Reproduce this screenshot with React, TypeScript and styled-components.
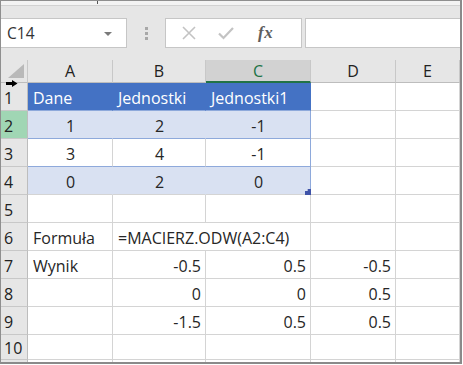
import React from "react";
import styled, { createGlobalStyle, css } from "styled-components";

const Global = createGlobalStyle`
  html, body { margin: 0; padding: 0; background: #ffffff; }
  *, *::before, *::after { box-sizing: border-box; }
  #root { width: 463px; height: 365px; }
`;

const FONT = `"Open Sans", "Liberation Sans", sans-serif`;

const Frame = styled.div`
  width: 462px;
  height: 364px;
  border-left: 1px solid #8f8f8f;
  border-top: 1px solid #8f8f8f;
  border-right: 2px solid #8a8a8a;
  border-bottom: 2px solid #8a8a8a;
  display: flex;
  flex-direction: column;
  overflow: hidden;
  background: #ffffff;
  font-family: ${FONT};
`;

const RibbonTail = styled.div`
  position: relative;
  height: 5px;
  flex: none;
  background: #f3f3f3;
  border-bottom: 1px solid #d2d2d2;
`;

const Tick = styled.span`
  position: absolute;
  left: 96px;
  top: 0;
  width: 1px;
  height: 3px;
  background: #555;
`;

const FormulaBar = styled.div`
  height: 54px;
  flex: none;
  background: #e6e6e6;
  display: flex;
  align-items: center;
`;

const NameBox = styled.div`
  width: 126px;
  height: 30px;
  background: #ffffff;
  border: 1px solid #c6c6c6;
  border-left: none;
  display: flex;
  align-items: center;
  justify-content: space-between;
  padding: 0 14px 0 6px;
  font-size: 15.5px;
  color: #333;
`;

const Caret = styled.span`
  width: 0;
  height: 0;
  border-left: 4px solid transparent;
  border-right: 4px solid transparent;
  border-top: 4px solid #7a7a7a;
  margin-top: 2px;
`;

const Grip = styled.div`
  width: 38px;
  display: flex;
  flex-direction: column;
  align-items: center;
  gap: 2px;
  & > span {
    width: 3px;
    height: 3px;
    background: #a8a8a8;
  }
`;

const FxButtons = styled.div`
  width: 137px;
  height: 30px;
  background: #ffffff;
  border: 1px solid #c6c6c6;
  display: flex;
  align-items: center;
  padding-left: 16px;
  gap: 22px;
`;

const FxIcon = styled.svg`
  display: block;
  flex: none;
`;

const FxText = styled.span`
  font-family: "Liberation Serif", serif;
  font-style: italic;
  font-weight: bold;
  font-size: 17px;
  color: #5e5e5e;
  margin-left: 2px;
  letter-spacing: 0.5px;
`;

const FormulaInput = styled.div`
  flex: 1;
  height: 30px;
  margin-left: 3px;
  background: #ffffff;
  border: 1px solid #c6c6c6;
  border-right: none;
`;

const Sheet = styled.div`
  flex: 1;
  display: grid;
  grid-template-columns: 27px 85px 93px 105px 85px 1fr;
  grid-template-rows: 23px repeat(9, 28px) 25px 1fr;
  overflow: hidden;
`;

const Corner = styled.div`
  position: relative;
  background: #e6e6e6;
  border-right: 1px solid #c8c8c8;
  border-bottom: 1px solid #bdbdbd;
`;

const CornerTriangle = styled.svg`
  position: absolute;
  left: 0;
  top: 0;
`;

const ColHeader = styled.div<{ $selected?: boolean }>`
  background: ${(p) => (p.$selected ? "#d2d2d2" : "#e6e6e6")};
  border-right: 1px solid #c8c8c8;
  border-bottom: ${(p) => (p.$selected ? "2px solid #217346" : "1px solid #bdbdbd")};
  display: flex;
  align-items: center;
  justify-content: center;
  font-size: 16px;
  color: ${(p) => (p.$selected ? "#217346" : "#222")};
  padding-top: ${(p) => (p.$selected ? "1px" : "0")};
`;

const RowHeader = styled.div<{ $selected?: boolean }>`
  position: relative;
  background: ${(p) => (p.$selected ? "#a0d6b4" : "#e6e6e6")};
  border-right: 1px solid #bdbdbd;
  border-bottom: 1px solid #c8c8c8;
  display: flex;
  align-items: center;
  padding: 2px 0 0 3px;
  font-size: 16px;
  color: #222;
`;

const SelectArrow = styled.svg`
  position: absolute;
  left: 5px;
  top: -3px;
`;

type Fill = "head" | "band" | "plain";

const fills: Record<Fill, string> = {
  head: "#4472c4",
  band: "#d9e1f2",
  plain: "transparent",
};

const Cell = styled.div<{
  $align?: "left" | "center" | "right";
  $fill?: Fill;
  $tableEdge?: boolean;
  $tableRow?: boolean;
  $span?: number;
}>`
  position: relative;
  grid-column: ${(p) => (p.$span ? `span ${p.$span}` : "auto")};
  background: ${(p) => fills[p.$fill || "plain"]};
  border-right: 1px solid
    ${(p) =>
      p.$tableEdge
        ? "#8ea9db"
        : p.$fill && p.$fill !== "plain"
        ? fills[p.$fill]
        : "#d4d4d4"};
  border-bottom: 1px solid ${(p) => (p.$tableRow ? "#8ea9db" : "#d4d4d4")};
  display: flex;
  align-items: center;
  justify-content: ${(p) =>
    p.$align === "center" ? "center" : p.$align === "right" ? "flex-end" : "flex-start"};
  padding: 3px 4px 0 5px;
  font-size: 16px;
  white-space: nowrap;
  color: ${(p) => (p.$fill === "head" ? "#ffffff" : "#262626")};
  ${(p) =>
    p.$fill === "head" &&
    css`
      border-right-color: #4472c4;
    `}
`;

const ResizeHandle = styled.span`
  position: absolute;
  right: -1px;
  bottom: -1px;
  width: 6px;
  height: 6px;
  background: #3f53a8;
  clip-path: polygon(45% 0, 100% 0, 100% 100%, 0 100%, 0 35%, 45% 35%);
`;

const cols = ["A", "B", "C", "D", "E"];

type CellData = {
  text?: string;
  align?: "left" | "center" | "right";
  span?: number;
};

const rows: { label: string; fill: Fill; table: boolean; cells: CellData[] }[] = [
  {
    label: "1",
    fill: "head",
    table: true,
    cells: [{ text: "Dane" }, { text: "Jednostki" }, { text: "Jednostki1" }],
  },
  {
    label: "2",
    fill: "band",
    table: true,
    cells: [
      { text: "1", align: "center" },
      { text: "2", align: "center" },
      { text: "-1", align: "center" },
    ],
  },
  {
    label: "3",
    fill: "plain",
    table: true,
    cells: [
      { text: "3", align: "center" },
      { text: "4", align: "center" },
      { text: "-1", align: "center" },
    ],
  },
  {
    label: "4",
    fill: "band",
    table: true,
    cells: [
      { text: "0", align: "center" },
      { text: "2", align: "center" },
      { text: "0", align: "center" },
    ],
  },
  { label: "5", fill: "plain", table: false, cells: [{}, {}, {}, {}, {}] },
  {
    label: "6",
    fill: "plain",
    table: false,
    cells: [{ text: "Formuła" }, { text: "=MACIERZ.ODW(A2:C4)", span: 2 }, {}, {}],
  },
  {
    label: "7",
    fill: "plain",
    table: false,
    cells: [
      { text: "Wynik" },
      { text: "-0.5", align: "right" },
      { text: "0.5", align: "right" },
      { text: "-0.5", align: "right" },
      {},
    ],
  },
  {
    label: "8",
    fill: "plain",
    table: false,
    cells: [
      {},
      { text: "0", align: "right" },
      { text: "0", align: "right" },
      { text: "0.5", align: "right" },
      {},
    ],
  },
  {
    label: "9",
    fill: "plain",
    table: false,
    cells: [
      {},
      { text: "-1.5", align: "right" },
      { text: "0.5", align: "right" },
      { text: "0.5", align: "right" },
      {},
    ],
  },
  { label: "10", fill: "plain", table: false, cells: [{}, {}, {}, {}, {}] },
  { label: "", fill: "plain", table: false, cells: [{}, {}, {}, {}, {}] },
];

export default function App() {
  return (
    <>
      <Global />
      <Frame>
        <RibbonTail>
          <Tick />
        </RibbonTail>
        <FormulaBar>
          <NameBox>
            <span>C14</span>
            <Caret />
          </NameBox>
          <Grip>
            <span />
            <span />
            <span />
          </Grip>
          <FxButtons>
            <FxIcon width="14" height="14" viewBox="0 0 14 14">
              <path d="M1 1 L13 13 M13 1 L1 13" stroke="#c3c3c3" strokeWidth="1.6" fill="none" />
            </FxIcon>
            <FxIcon width="16" height="14" viewBox="0 0 16 14">
              <path d="M1 7.5 L5.5 12 L15 2" stroke="#c3c3c3" strokeWidth="2.2" fill="none" />
            </FxIcon>
            <FxText>fx</FxText>
          </FxButtons>
          <FormulaInput />
        </FormulaBar>
        <Sheet>
          <Corner>
            <CornerTriangle width="26" height="22" viewBox="0 0 26 22">
              <polygon points="23,4 23,18 7,18" fill="#b9b9b9" />
            </CornerTriangle>
          </Corner>
          {cols.map((c) => (
            <ColHeader key={c} $selected={c === "C"}>
              {c}
            </ColHeader>
          ))}
          {rows.map((row, ri) => (
            <React.Fragment key={ri}>
              <RowHeader $selected={ri === 1}>
                {row.label}
                {ri === 0 && (
                  <SelectArrow width="12" height="7" viewBox="0 0 12 7">
                    <path d="M0 2 H6 V0 L11.5 3.5 L6 7 V5 H0 Z" fill="#000" />
                  </SelectArrow>
                )}
              </RowHeader>
              {row.cells.map((cell, ci) => {
                const inTable = row.table && ci < 3;
                return (
                  <Cell
                    key={ci}
                    $align={cell.align}
                    $fill={inTable ? row.fill : "plain"}
                    $tableEdge={inTable && ci === 2 && row.fill !== "head"}
                    $tableRow={inTable && ri < 3}
                    $span={cell.span}
                  >
                    {cell.text}
                    {ri === 3 && ci === 2 && <ResizeHandle />}
                  </Cell>
                );
              })}
              {row.table && [0, 1].map((k) => <Cell key={`x${k}`} />)}
            </React.Fragment>
          ))}
        </Sheet>
      </Frame>
    </>
  );
}
